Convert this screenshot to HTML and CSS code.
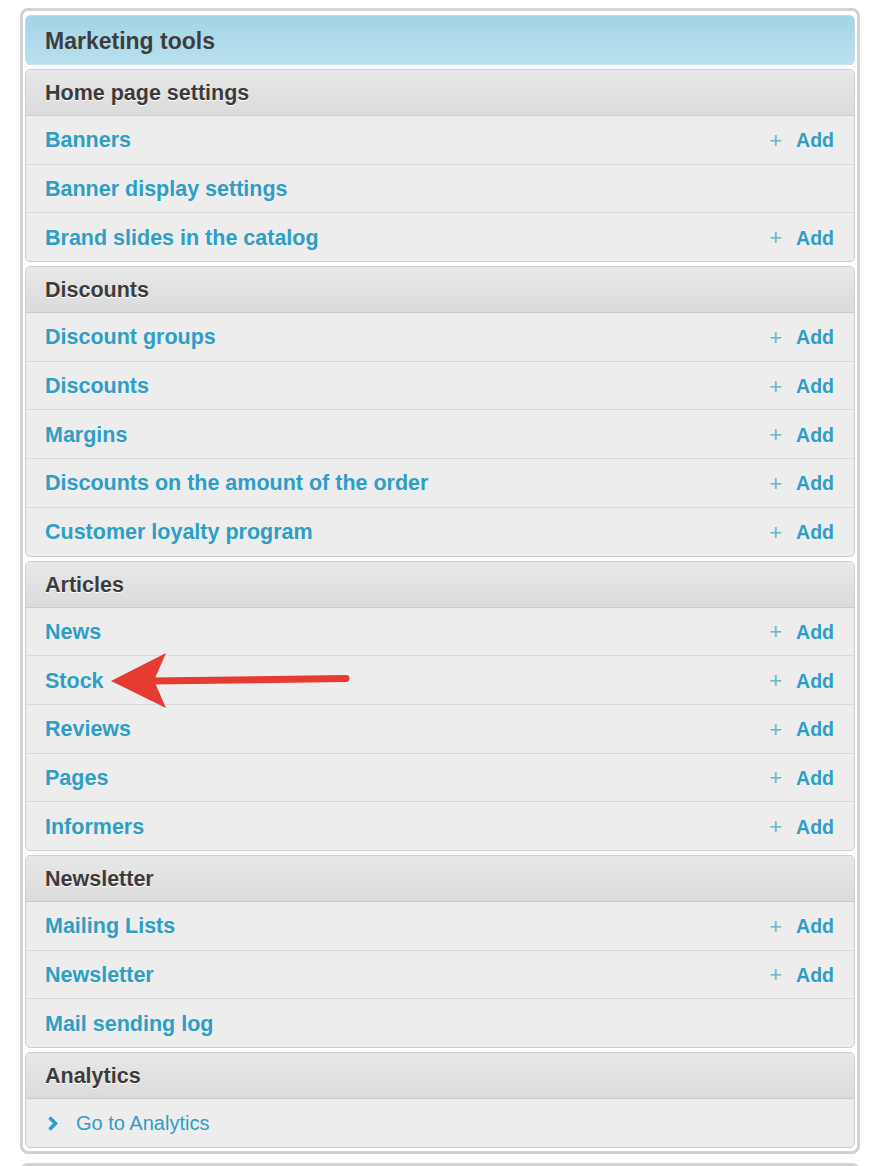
FILE: index.html
```html
<!DOCTYPE html>
<html lang="en">
<head>
    <meta charset="UTF-8">
    <meta name="viewport" content="width=device-width, initial-scale=1.0">
    <title>Marketing tools</title>
    <link rel="stylesheet" href="styles.css">
</head>
<body>

    <div class="panel">
        <div class="panel-title">Marketing tools</div>

        <div class="group">
            <div class="group-head">Home page settings</div>
            <div class="row"><a class="link">Banners</a><a class="add"><span class="plus">+</span>Add</a></div>
            <div class="row"><a class="link">Banner display settings</a></div>
            <div class="row"><a class="link">Brand slides in the catalog</a><a class="add"><span class="plus">+</span>Add</a></div>
        </div>

        <div class="group">
            <div class="group-head">Discounts</div>
            <div class="row"><a class="link">Discount groups</a><a class="add"><span class="plus">+</span>Add</a></div>
            <div class="row"><a class="link">Discounts</a><a class="add"><span class="plus">+</span>Add</a></div>
            <div class="row"><a class="link">Margins</a><a class="add"><span class="plus">+</span>Add</a></div>
            <div class="row"><a class="link">Discounts on the amount of the order</a><a class="add"><span class="plus">+</span>Add</a></div>
            <div class="row"><a class="link">Customer loyalty program</a><a class="add"><span class="plus">+</span>Add</a></div>
        </div>

        <div class="group">
            <div class="group-head">Articles</div>
            <div class="row"><a class="link">News</a><a class="add"><span class="plus">+</span>Add</a></div>
            <div class="row"><a class="link">Stock</a><a class="add"><span class="plus">+</span>Add</a></div>
            <div class="row"><a class="link">Reviews</a><a class="add"><span class="plus">+</span>Add</a></div>
            <div class="row"><a class="link">Pages</a><a class="add"><span class="plus">+</span>Add</a></div>
            <div class="row"><a class="link">Informers</a><a class="add"><span class="plus">+</span>Add</a></div>
        </div>

        <div class="group">
            <div class="group-head">Newsletter</div>
            <div class="row"><a class="link">Mailing Lists</a><a class="add"><span class="plus">+</span>Add</a></div>
            <div class="row"><a class="link">Newsletter</a><a class="add"><span class="plus">+</span>Add</a></div>
            <div class="row"><a class="link">Mail sending log</a></div>
        </div>

        <div class="group">
            <div class="group-head">Analytics</div>
            <div class="row">
                <a class="goto">
                    <svg class="chevron" width="11" height="15" viewBox="0 0 11 15"><path d="M2.5 1.5 L8.5 7.5 L2.5 13.5" fill="none" stroke="#2e9ec6" stroke-width="3.6"/></svg>
                    Go to Analytics
                </a>
            </div>
        </div>
    </div>

    <div class="panel-next"></div>

    <!-- red pointer over the "Stock" row -->
    <svg class="pointer" width="876" height="1166" viewBox="0 0 876 1166">
        <line x1="150" y1="681" x2="346" y2="678.5" stroke="#e53b30" stroke-width="7" stroke-linecap="round"/>
        <polygon points="111,681 166,653 154,680.5 166,708" fill="#e53b30"/>
    </svg>

</body>
</html>
```

FILE: styles.css
```css
body {
    font-family: "Liberation Sans", Arial, sans-serif;
    margin: 0;
    padding: 8px 16px 0 20px;
    background-color: #ffffff;
}
.panel {
    border: 3px solid #d2d2d2;
    border-radius: 8px;
    padding: 4px 2px 3px 2px;
    background: #ffffff;
}
.panel-title {
    height: 50px;
    line-height: 50px;
    padding-left: 19px;
    font-size: 23px;
    font-weight: bold;
    color: #3d3d3d;
    background: linear-gradient(#a3d5e6, #b9e0ed);
    border: 1px solid #c3dfe8;
    border-radius: 5px;
    box-sizing: border-box;
}
.group {
    margin-top: 4px;
    border: 1px solid #cdcdcd;
    border-radius: 5px;
    background: #ededed;
    overflow: hidden;
}
.group-head {
    height: 45px;
    line-height: 46px;
    padding-left: 19px;
    font-size: 21.5px;
    font-weight: bold;
    color: #3b3b3b;
    text-shadow: 0 1px 0 #ffffff;
    background: linear-gradient(#e8e8e8, #dbdbdb);
    border-bottom: 1px solid #cbcbcb;
}
.row {
    display: flex;
    align-items: center;
    justify-content: space-between;
    box-sizing: border-box;
    height: 48.7px;
    padding: 2px 20px 0 19px;
    border-top: 1px solid #d9d9d9;
}
.group-head + .row {
    border-top: none;
    height: 47.7px;
}
.link {
    font-size: 21.5px;
    font-weight: bold;
    color: #2e9ec6;
    cursor: pointer;
}
.add {
    display: flex;
    align-items: center;
    font-size: 19.5px;
    font-weight: bold;
    color: #2e9ec6;
    cursor: pointer;
}
.plus {
    font-size: 22px;
    font-weight: normal;
    color: #6cb6ce;
    margin-right: 14px;
}
.goto {
    display: flex;
    align-items: center;
    gap: 18px;
    margin-left: 2px;
    font-size: 20px;
    color: #2e9ec6;
    cursor: pointer;
}
.chevron {
    display: block;
}
.panel-next {
    margin-top: 9px;
    height: 20px;
    border: 3px solid #d2d2d2;
    border-bottom: none;
    border-radius: 8px 8px 0 0;
}
.pointer {
    position: absolute;
    left: 0;
    top: 0;
    pointer-events: none;
}
```
